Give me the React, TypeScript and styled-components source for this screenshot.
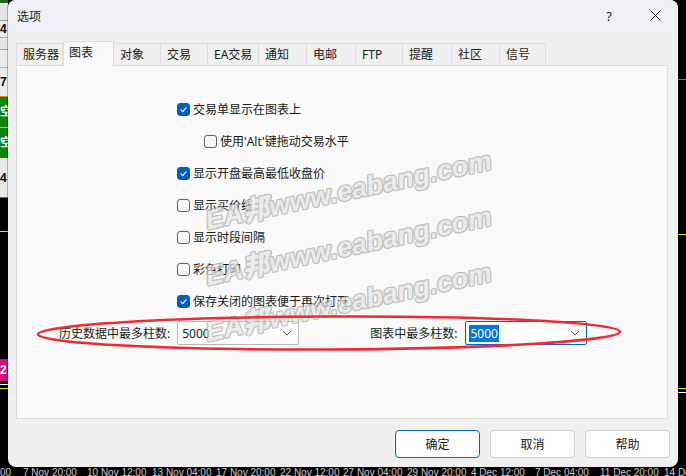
import React from 'react';
import styled, { createGlobalStyle } from 'styled-components';

const GlobalStyle = createGlobalStyle`
  html, body { margin: 0; padding: 0; background: #000; }
  body { width: 686px; height: 476px; overflow: hidden; }
`;

const UI_FONT = `"Noto Sans", "Noto Sans CJK SC", sans-serif`;

const Screen = styled.div`
  width: 686px;
  height: 476px;
  display: grid;
  grid-template-rows: 467px 9px;
  background: #000;
  overflow: hidden;
`;

const Desk = styled.div`
  display: flex;
  height: 467px;
`;

const Strip = styled.div<{ $w: number }>`
  width: ${(p) => p.$w}px;
  flex: none;
  display: flex;
  flex-direction: column;
  background: #000;
  overflow: hidden;
`;

const StripBlock = styled.div<{ $h: number; $bg: string; $line?: string; $fg?: string }>`
  height: ${(p) => p.$h}px;
  flex: none;
  background: ${(p) => p.$bg};
  border-bottom: ${(p) => (p.$line ? `1px solid ${p.$line}` : 'none')};
  box-sizing: border-box;
  color: ${(p) => p.$fg || '#000'};
  font: bold 12px "Liberation Sans", "Noto Sans CJK SC", sans-serif;
  line-height: ${(p) => p.$h}px;
  white-space: nowrap;
  overflow: hidden;
`;

const Dialog = styled.div`
  position: relative;
  width: 670px;
  height: 467px;
  flex: none;
  background: #f0f0f0;
  border-radius: 8px;
  overflow: hidden;
  display: flex;
  flex-direction: column;
  font-family: ${UI_FONT};
  font-size: 12px;
  color: #1a1a1a;
  box-shadow: 0 0 0 1px rgba(0, 0, 0, 0.25);
`;

const TitleBar = styled.div`
  height: 31px;
  flex: none;
  background: #eef2f7;
  display: flex;
  align-items: center;
  padding-left: 9px;
`;

const Title = styled.div`
  flex: 1;
  font-size: 12px;
  color: #1a1a1a;
`;

const CaptionButton = styled.div`
  width: 46px;
  height: 31px;
  display: flex;
  align-items: center;
  justify-content: center;
  font-size: 13px;
  color: #1a1a1a;
`;

const Body = styled.div`
  flex: 1;
  display: flex;
  flex-direction: column;
  padding: 10px 8px 0 8px;
`;

const TabRow = styled.div`
  display: flex;
  align-items: flex-end;
  height: 24px;
  position: relative;
  z-index: 1;
`;

const Tab = styled.div<{ $w: number; $active?: boolean }>`
  width: ${(p) => p.$w}px;
  height: ${(p) => (p.$active ? 25 : 22)}px;
  margin-bottom: ${(p) => (p.$active ? -1 : 0)}px;
  box-sizing: border-box;
  background: ${(p) => (p.$active ? '#f9f9f9' : '#f0f0f0')};
  border: 1px solid #dedede;
  border-bottom: none;
  border-left: ${(p) => (p.$active ? '1px solid #dedede' : 'none')};
  padding: ${(p) => (p.$active ? '1px 0 0 5px' : '0 0 0 6px')};
  display: flex;
  align-items: ${(p) => (p.$active ? 'flex-start' : 'center')};
  line-height: 20px;
  white-space: nowrap;
  &:first-child { border-left: 1px solid #dedede; }
`;

const Panel = styled.div`
  height: 354px;
  margin-right: 2px;
  box-sizing: border-box;
  background: #f9f9f9;
  border: 1px solid #dcdcdc;
  display: flex;
  flex-direction: column;
  padding: 27px 0 0 160px;
`;

const CheckRow = styled.div<{ $indent?: boolean }>`
  height: 32px;
  display: flex;
  align-items: center;
  gap: 3px;
  padding-left: ${(p) => (p.$indent ? 27 : 0)}px;
  white-space: nowrap;
`;

const Box = styled.div<{ $checked?: boolean }>`
  width: 13px;
  height: 13px;
  box-sizing: border-box;
  border-radius: 3px;
  flex: none;
  background: ${(p) => (p.$checked ? '#005fb8' : '#f6f6f6')};
  border: 1px solid ${(p) => (p.$checked ? '#005fb8' : '#616161')};
  display: flex;
  align-items: center;
  justify-content: center;
`;

const FieldRow = styled.div`
  margin: 4px 0 0 -118px;
  height: 24px;
  display: flex;
  align-items: center;
`;

const FieldLabel = styled.div<{ $gap: number; $lead?: number }>`
  margin-left: ${(p) => p.$lead || 0}px;
  margin-right: ${(p) => p.$gap}px;
  white-space: nowrap;
`;

const Combo = styled.div<{ $focused?: boolean }>`
  width: 122px;
  height: 24px;
  box-sizing: border-box;
  background: #fff;
  border: 1px solid ${(p) => (p.$focused ? '#0067c0' : '#b8b8b8')};
  border-radius: 2px;
  display: flex;
  align-items: center;
  justify-content: space-between;
  padding: 0 6px 0 3px;
`;

const ComboValue = styled.span<{ $selected?: boolean }>`
  font-size: 12px;
  line-height: 17px;
  padding: 0 1px;
  background: ${(p) => (p.$selected ? '#0078d7' : 'transparent')};
  color: ${(p) => (p.$selected ? '#fff' : '#1a1a1a')};
`;

const ButtonRow = styled.div`
  display: flex;
  justify-content: flex-end;
  gap: 10px;
  margin-top: 11px;
`;

const Button = styled.div<{ $default?: boolean }>`
  width: 85px;
  height: 28px;
  box-sizing: border-box;
  border-radius: 4px;
  background: #fdfdfd;
  border: 1px solid ${(p) => (p.$default ? '#0067c0' : '#d0d0d0')};
  display: flex;
  align-items: center;
  justify-content: center;
`;

const Overlay = styled.div`
  position: absolute;
  inset: 0;
  pointer-events: none;
  z-index: 5;
`;

const Watermark = styled.div`
  position: absolute;
  left: 340px;
  transform: translate(-50%, -50%) rotate(-12deg);
  font: italic 900 27px "Liberation Sans", "Noto Sans CJK SC", sans-serif;
  color: #e6e6e6;
  white-space: nowrap;
  opacity: 0.72;
  text-shadow: 1px 0 0 #ababab, -1px 0 0 #ababab, 0 1px 0 #ababab, 0 -1px 0 #ababab,
    1px 1px 0 #ababab, -1px -1px 0 #ababab, 1px -1px 0 #ababab, -1px 1px 0 #ababab;
`;

const RingSvg = styled.svg`
  position: absolute;
  left: 0;
  top: 0;
`;

const Axis = styled.div`
  height: 9px;
  display: flex;
  overflow: hidden;
  background: #000;
`;

const AxisLabel = styled.div<{ $w: number }>`
  width: ${(p) => p.$w}px;
  flex: none;
  font: 10px "Liberation Sans", sans-serif;
  color: #c8c8c8;
  line-height: 10px;
  padding-top: 1px;
  white-space: nowrap;
`;

const CheckMark = () => (
  <svg width="9" height="9" viewBox="0 0 9 9">
    <path d="M1.6 4.7 L3.6 6.6 L7.5 2.4" fill="none" stroke="#fff" strokeWidth="1.1" />
  </svg>
);

const Chevron = () => (
  <svg width="10" height="6" viewBox="0 0 10 6">
    <path d="M1 1 L5 5 L9 1" fill="none" stroke="#555" strokeWidth="1" />
  </svg>
);

const CloseIcon = () => (
  <svg width="11" height="11" viewBox="0 0 11 11">
    <path d="M0.5 0.5 L10.5 10.5 M10.5 0.5 L0.5 10.5" stroke="#1a1a1a" strokeWidth="1" />
  </svg>
);

const tabs = [
  { label: '服务器', w: 47 },
  { label: '图表', w: 51, active: true },
  { label: '对象', w: 47 },
  { label: '交易', w: 47 },
  { label: 'EA交易', w: 51 },
  { label: '通知', w: 48 },
  { label: '电邮', w: 49 },
  { label: 'FTP', w: 47 },
  { label: '提醒', w: 49 },
  { label: '社区', w: 48 },
  { label: '信号', w: 46 },
];

const checks = [
  { label: '交易单显示在图表上', checked: true },
  { label: "使用'Alt'键拖动交易水平", checked: false, indent: true },
  { label: '显示开盘最高最低收盘价', checked: true },
  { label: '显示买价线', checked: false },
  { label: '显示时段间隔', checked: false },
  { label: '彩色打印', checked: false },
  { label: '保存关闭的图表便于再次打开', checked: true },
];

const leftBlocks = [
  { h: 3, bg: '#1f6b1f' },
  { h: 18, bg: '#e6e6e6', line: '#9a9a9a' },
  { h: 17, bg: '#ececec', text: '4', line: '#b0b0b0' },
  { h: 12, bg: '#e6e6e6', line: '#a0a0a0' },
  { h: 18, bg: '#ececec', line: '#b0b0b0' },
  { h: 29, bg: '#ececec', text: '7', line: '#f08a00' },
  { h: 31, bg: '#0a850a', text: '空', fg: '#fff', line: '#a0c0a0' },
  { h: 30, bg: '#0a850a', text: '空', fg: '#fff' },
  { h: 40, bg: '#e8e8e8', text: '4', line: '#e84010' },
  { h: 34, bg: '#000', line: '#e8e000' },
  { h: 127, bg: '#000' },
  { h: 22, bg: '#d4107c', text: '2', fg: '#fff' },
  { h: 4, bg: '#000', line: '#ffffff' },
  { h: 4, bg: '#000', line: '#e8e000' },
  { h: 98, bg: '#000' },
];

const rightBlocks = [
  { h: 80, bg: '#000', line: '#777' },
  { h: 155, bg: '#000', line: '#e8e000' },
  { h: 154, bg: '#000', line: '#e8e000' },
  { h: 4, bg: '#000', line: '#ffffff' },
  { h: 74, bg: '#000' },
];

const axisLabels = [
  { t: '00', w: 23 },
  { t: '7 Nov 20:00', w: 64 },
  { t: '10 Nov 12:00', w: 65 },
  { t: '13 Nov 04:00', w: 64 },
  { t: '17 Nov 20:00', w: 64 },
  { t: '22 Nov 12:00', w: 63 },
  { t: '27 Nov 04:00', w: 64 },
  { t: '29 Nov 20:00', w: 64 },
  { t: '4 Dec 12:00', w: 64 },
  { t: '7 Dec 04:00', w: 65 },
  { t: '11 Dec 20:00', w: 64 },
  { t: '14 Dec', w: 40 },
];

export default function App() {
  return (
    <>
      <GlobalStyle />
      <Screen>
        <Desk>
          <Strip $w={8}>
            {leftBlocks.map((b, i) => (
              <StripBlock key={i} $h={b.h} $bg={b.bg} $line={b.line} $fg={b.fg}>
                {b.text}
              </StripBlock>
            ))}
          </Strip>
          <Dialog>
            <TitleBar>
              <Title>选项</Title>
              <CaptionButton>?</CaptionButton>
              <CaptionButton>
                <CloseIcon />
              </CaptionButton>
            </TitleBar>
            <Body>
              <TabRow>
                {tabs.map((t) => (
                  <Tab key={t.label} $w={t.w} $active={t.active}>
                    {t.label}
                  </Tab>
                ))}
              </TabRow>
              <Panel>
                {checks.map((c) => (
                  <CheckRow key={c.label} $indent={c.indent}>
                    <Box $checked={c.checked}>{c.checked && <CheckMark />}</Box>
                    {c.label}
                  </CheckRow>
                ))}
                <FieldRow>
                  <FieldLabel $gap={7}>历史数据中最多柱数:</FieldLabel>
                  <Combo>
                    <ComboValue>5000</ComboValue>
                    <Chevron />
                  </Combo>
                  <FieldLabel $lead={71} $gap={8}>
                    图表中最多柱数:
                  </FieldLabel>
                  <Combo $focused>
                    <ComboValue $selected>5000</ComboValue>
                    <Chevron />
                  </Combo>
                </FieldRow>
              </Panel>
              <ButtonRow>
                <Button $default>确定</Button>
                <Button>取消</Button>
                <Button>帮助</Button>
              </ButtonRow>
            </Body>
            <Overlay>
              <Watermark style={{ top: 188 }}>EA邦www.eabang.com</Watermark>
              <Watermark style={{ top: 244 }}>EA邦www.eabang.com</Watermark>
              <Watermark style={{ top: 300 }}>EA邦www.eabang.com</Watermark>
              <RingSvg width="670" height="467" viewBox="0 0 670 467">
                <ellipse
                  cx="321"
                  cy="333"
                  rx="291"
                  ry="16.5"
                  fill="none"
                  stroke="#ee2a34"
                  strokeWidth="2.6"
                  transform="rotate(-0.25 321 333)"
                />
              </RingSvg>
            </Overlay>
          </Dialog>
          <Strip $w={8}>
            {rightBlocks.map((b, i) => (
              <StripBlock key={i} $h={b.h} $bg={b.bg} $line={b.line} />
            ))}
          </Strip>
        </Desk>
        <Axis>
          {axisLabels.map((a) => (
            <AxisLabel key={a.t} $w={a.w}>
              {a.t}
            </AxisLabel>
          ))}
        </Axis>
      </Screen>
    </>
  );
}
